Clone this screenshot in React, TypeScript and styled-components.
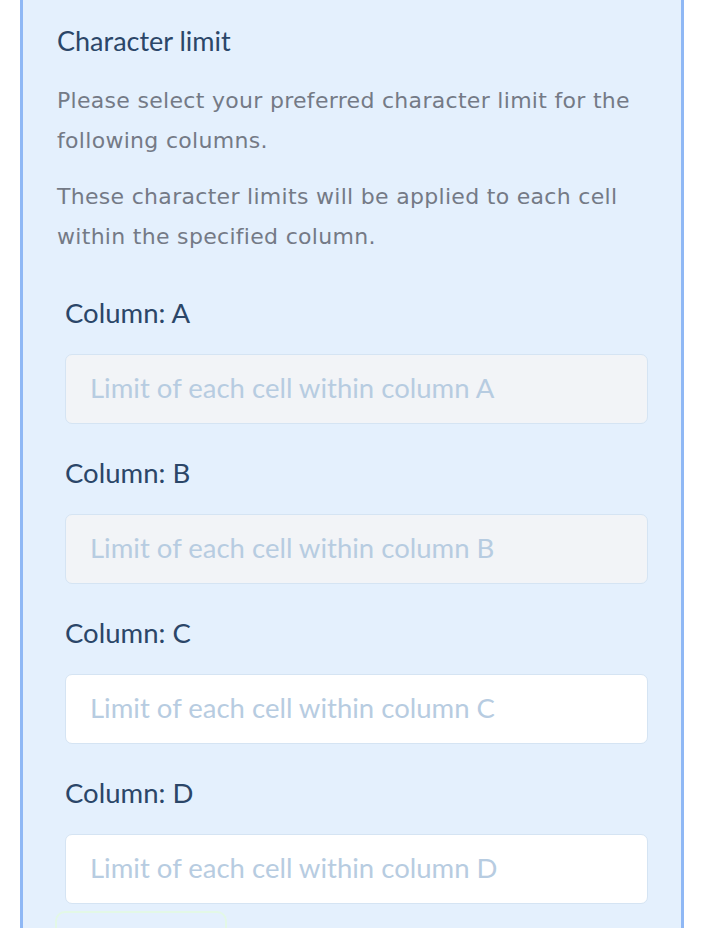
import React from "react";
import styled, { createGlobalStyle } from "styled-components";

const GlobalStyle = createGlobalStyle`
  html, body { margin: 0; padding: 0; background: #ffffff; }
  * { box-sizing: border-box; }
`;

const Page = styled.div`
  width: 704px;
  height: 928px;
  overflow: hidden;
  padding: 0 20px;
`;

const Panel = styled.section`
  background: #e4f0fd;
  border-left: 3px solid #8fb8f5;
  border-right: 3px solid #8fb8f5;
  min-height: 928px;
  padding: 21px 33px 0 34px;
  display: flex;
  flex-direction: column;
`;

const Title = styled.h2`
  margin: 0 0 20px;
  font-family: Lato, "Liberation Sans", sans-serif;
  font-weight: 400;
  font-size: 27px;
  line-height: 40px;
  color: #2b4668;
`;

const Para = styled.p`
  margin: 0 0 16px;
  font-family: "DejaVu Sans", "Liberation Sans", sans-serif;
  font-size: 22px;
  letter-spacing: 0.3px;
  line-height: 40px;
  color: #747a86;
`;

const Columns = styled.div`
  margin: 20px 0 0 8px;
  display: flex;
  flex-direction: column;
  gap: 29px;
`;

const Group = styled.div`
  display: flex;
  flex-direction: column;
`;

const Label = styled.label`
  font-family: Lato, "Liberation Sans", sans-serif;
  font-size: 27.5px;
  line-height: 40px;
  color: #2b4668;
  margin-bottom: 21px;
`;

const Input = styled.input<{ $disabled?: boolean }>`
  height: 70px;
  width: 100%;
  border: 1.5px solid #d5e4f3;
  border-radius: 7px;
  background: ${(p) => (p.$disabled ? "#f2f4f7" : "#ffffff")};
  padding: 0 24px 3px;
  font-family: Lato, "Liberation Sans", sans-serif;
  font-size: 27.5px;
  color: #2b4668;
  outline: none;
  &::placeholder {
    color: #b7cce1;
  }
`;

const SubmitButton = styled.button`
  margin: 7px 0 0 -2px;
  width: 172px;
  height: 60px;
  border: 2px solid #e3f8e6;
  border-radius: 10px;
  background: transparent;
`;

const columns = [
  { name: "A", disabled: true },
  { name: "B", disabled: true },
  { name: "C", disabled: false },
  { name: "D", disabled: false },
];

export default function App() {
  return (
    <>
      <GlobalStyle />
      <Page>
        <Panel>
          <Title>Character limit</Title>
          <Para>Please select your preferred character limit for the following columns.</Para>
          <Para>These character limits will be applied to each cell within the specified column.</Para>
          <Columns>
            {columns.map((c) => (
              <Group key={c.name}>
                <Label>Column: {c.name}</Label>
                <Input
                  $disabled={c.disabled}
                  readOnly={c.disabled}
                  placeholder={`Limit of each cell within column ${c.name}`}
                />
              </Group>
            ))}
          </Columns>
          <SubmitButton />
        </Panel>
      </Page>
    </>
  );
}
